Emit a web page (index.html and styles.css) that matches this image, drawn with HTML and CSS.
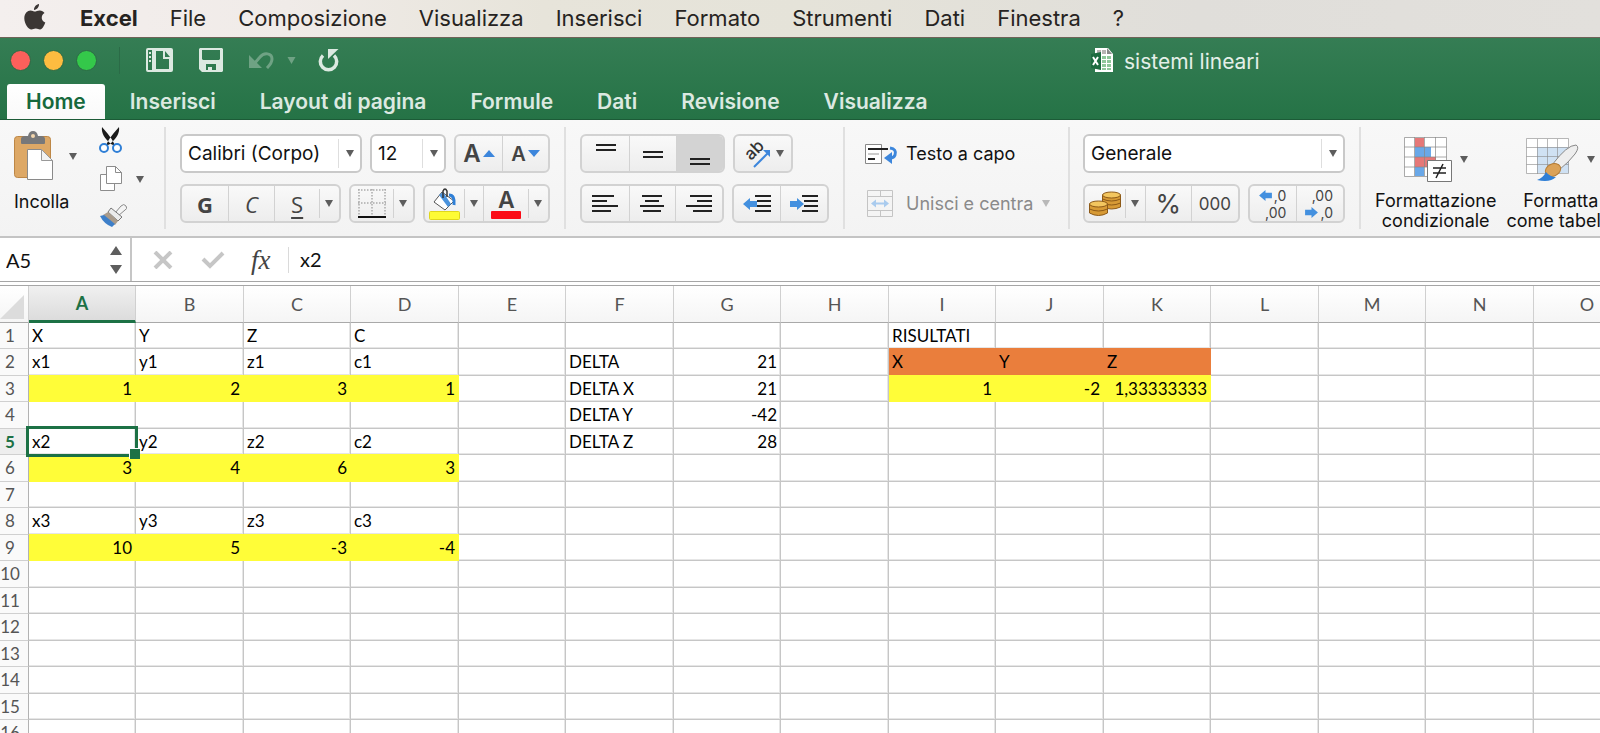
FILE: index.html
```
<!DOCTYPE html>
<html lang="it">
<head>
<meta charset="utf-8">
<title>sistemi lineari</title>
<link rel="stylesheet" href="styles.css">
</head>
<body>
<svg class="defs" aria-hidden="true">
  <symbol id="caret" viewBox="0 0 8 7"><path d="M0 0h8L4 7z"/></symbol>
  <symbol id="arrow" viewBox="0 0 14 12"><path d="M0 6l7-6v3h7v6H7v3z"/></symbol>
</svg>
<nav class="menubar" aria-label="Menu">
  <button class="apple" aria-label="Apple"><svg width="22" height="27" viewBox="0 0 22 27"><path d="M15 0c.3 2.800-2.200 6-5 5.900C9.700 3.200 12.300.3 15 0zM10.900 7.600c1 0 2.800-1.300 5-1.200 1.900.1 3.500.9 4.600 2.500-4.100 2.600-3.400 7.900.8 9.700-.9 2.600-3 6.900-5.200 7-1.600.1-2.200-1-4.300-1s-2.800 1-4.300 1C4.500 25.700.3 19.500.3 14.200c0-5 3.200-7.700 6.200-7.800 1.800 0 3.300 1.200 4.400 1.200z"/></svg></button>
  <button class="app">Excel</button><button>File</button><button>Composizione</button><button>Visualizza</button><button>Inserisci</button><button>Formato</button><button>Strumenti</button><button>Dati</button><button>Finestra</button><button>?</button>
</nav>
<header class="window-head">
  <div class="titlebar">
    <div class="lights"><button class="red" aria-label="Chiudi"></button><button class="amber" aria-label="Riduci"></button><button class="green" aria-label="Ingrandisci"></button></div>
    <div class="quick">
      <button aria-label="Nuovo"><svg width="27" height="24" viewBox="0 0 27 24"><path fill-rule="evenodd" d="M2 0h23a2 2 0 0 1 2 2v20a2 2 0 0 1-2 2H2a2 2 0 0 1-2-2V2a2 2 0 0 1 2-2zM2 2v20h4V2zM10 3v18h13v-10h-6V3zM19 3v6h5z"/><path d="M3 4h2v2H3zM3 8h2v2H3zM3 12h2v2H3z"/></svg></button>
      <button aria-label="Salva"><svg width="24" height="24" viewBox="0 0 24 24"><path fill-rule="evenodd" d="M1 0h22l1 1v22l-1 1H3l-3-3V1zM3 2v9l1 1h16l1-1V2zM7 16v6h2v-3h4v3h4v-6z"/></svg></button>
      <button class="undo" aria-label="Annulla"><svg width="26" height="18" viewBox="0 0 26 18"><path d="M0 4v13h13z"/><path d="M5 13l6-7c4-5 12-4 12 2 0 4-2 6-5 9" fill="none" stroke="currentColor" stroke-width="3"/></svg></button>
      <button class="undo-more" aria-label="Altre azioni"><svg width="9" height="7"><use href="#caret"/></svg></button>
      <button aria-label="Ripeti"><svg width="21" height="24" viewBox="0 0 21 24"><path d="M10 1h10.500L10 11z"/><path d="M5 7.500A8.200 8.200 0 1 0 16 7.500" fill="none" stroke="currentColor" stroke-width="3.500"/></svg></button>
    </div>
    <div class="doc"><svg width="22" height="26" viewBox="0 0 22 26"><path d="M4 1h13l5 6v18H4z" fill="#fff"/><path d="M6 3h4v4H6zM11 3h4v4h-4z" fill="#b8b4b4"/><path d="M16 1l5 6h-5z" fill="#8a8a8a"/><path d="M11 9h4v3h-4zM16 9h4v3h-4zM11 13h4v3h-4zM16 13h4v3h-4zM11 17h4v3h-4zM16 17h4v3h-4zM11 21h4v2h-4zM16 21h4v2h-4z" fill="#8fc79a"/><path d="M0 7l10-2v18l-10-2z" fill="#1d6b40"/><path d="M2 10l5 8M7 10l-5 8" stroke="#fff" stroke-width="2"/></svg><span>sistemi lineari</span></div>
  </div>
  <div class="tabs" role="tablist">
    <button class="active">Home</button><button>Inserisci</button><button>Layout di pagina</button><button>Formule</button><button>Dati</button><button>Revisione</button><button>Visualizza</button>
  </div>
</header>
<section class="ribbon" aria-label="Home">
  <div class="clip">
    <button class="paste"><span class="row"><svg width="40" height="50" viewBox="0 0 40 50"><rect x=".5" y="5.500" width="36" height="41" rx="3" fill="#dda866" stroke="#bd8746"/><path d="M7 12V8q0-3 4-3h3q1-5 5-5t5 5h3q4 0 4 3v4q0 1-1 1H8q-1 0-1-1z" fill="#77787a"/><circle cx="19" cy="5" r="2" fill="#f3d6ad"/><path d="M13.500 18.500h14l11 11v19h-25z" fill="#fff" stroke="#8a8a8a"/><path d="M27.500 18.500v11h11z" fill="#f2f2f2" stroke="#999"/></svg><svg class="caret" width="8" height="7"><use href="#caret"/></svg></span><span>Incolla</span></button>
    <div class="clip-tools">
      <button aria-label="Taglia"><svg width="24" height="27" viewBox="0 0 24 27"><path d="M3 0c-1 6 3 12 9 17l4 2C14 12 8 6 3 0zM20 0c1 6-3 12-9 17l-4 2C9 12 15 6 20 0z" fill="#1b1b1b"/><g fill="#fff" stroke="#2f7fd6" stroke-width="2"><circle cx="5" cy="21" r="4"/><circle cx="18" cy="21" r="4"/></g></svg></button>
      <button aria-label="Copia"><svg width="24" height="26" viewBox="0 0 24 26" fill="#fff" stroke="#8c8c8c"><path d="M1.500 8.500h14v16h-14z"/><path d="M7.500 .5h9l6 6v11h-15z"/><path d="M16.500 .5v6h6z"/></svg><svg class="caret" width="8" height="7"><use href="#caret"/></svg></button>
      <button aria-label="Copia formato"><svg width="28" height="25" viewBox="0 0 28 25"><path d="M16 9l6-7q3-3 5 0t-1 4l-7 6z" fill="#f4f4f4" stroke="#8a8a8a"/><path d="M12 4l11 9-4 4L9 8z" fill="#ececec" stroke="#777"/><path d="M9 8l10 9-3 4L4 11z" fill="#a99b8b"/><path d="M1 12l4-1 11 9-3 3Q5 20 1 12z" fill="#3d7fc9"/></svg></button>
    </div>
  </div>
  <div class="font panel">
    <div class="row">
      <label class="combo grow"><select aria-label="Carattere"><option>Calibri (Corpo)</option></select><svg class="caret" width="8" height="7"><use href="#caret"/></svg></label>
      <label class="combo size"><select aria-label="Dimensione"><option>12</option></select><svg class="caret" width="8" height="7"><use href="#caret"/></svg></label>
      <div class="group">
        <button class="b46" aria-label="Aumenta dimensione"><span class="big-a">A</span><svg width="12" height="7" fill="#3c86dc"><path d="M0 7h12L6 0z"/></svg></button>
        <button class="b46" aria-label="Riduci dimensione"><span class="small-a">A</span><svg width="12" height="7" fill="#3c86dc"><path d="M0 0h12L6 7z"/></svg></button>
      </div>
    </div>
    <div class="row spread">
      <div class="group">
        <button class="b48 letter bold">G</button><button class="b48 letter italic">C</button><button class="b46 letter under">S</button><button class="more" aria-label="Altro"><svg class="caret" width="8" height="7"><use href="#caret"/></svg></button>
      </div>
      <div class="group">
        <button class="b44" aria-label="Bordi"><svg width="28" height="29" viewBox="0 0 28 29"><path d="M0 1h28M0 14h28M1 0v26M14 0v26M27 0v26" stroke="#aaa" stroke-width="1.500" stroke-dasharray="1.500 1.500"/><path d="M0 28h28" stroke="#111" stroke-width="2"/></svg></button><button class="more" aria-label="Altro"><svg class="caret" width="8" height="7"><use href="#caret"/></svg></button>
      </div>
      <div class="group">
        <button class="b40" aria-label="Riempimento"><svg width="31" height="32" viewBox="0 0 31 32"><path d="M13 4l12 9-9 9L5 14z" fill="#fff" stroke="#555"/><path d="M10 7l4-3 8 12-3 3z" fill="#4a93dd"/><path d="M14 10V3q2-4 4 0v6" fill="none" stroke="#333" stroke-width="1.500"/><path d="M20 7q6 0 5 10" fill="none" stroke="#2f7fd6" stroke-width="3"/><rect x=".5" y="23.500" width="30" height="8" rx="1" fill="#fdfb35" stroke="#dfd71c"/></svg></button><button class="more" aria-label="Altro"><svg class="caret" width="8" height="7"><use href="#caret"/></svg></button>
        <button class="b46 font-color" aria-label="Colore carattere"><span>A</span><i></i></button><button class="more" aria-label="Altro"><svg class="caret" width="8" height="7"><use href="#caret"/></svg></button>
      </div>
    </div>
  </div>
  <div class="align panel">
    <div class="row">
      <div class="group">
        <button class="b48" aria-label="In alto"><svg width="20" height="26" stroke="#222" stroke-width="2"><path d="M0 4h20M0 9h20"/></svg></button><button class="b48" aria-label="Al centro"><svg width="20" height="26" stroke="#222" stroke-width="2"><path d="M0 11h20M0 16h20"/></svg></button><button class="b48 pressed" aria-label="In basso"><svg width="20" height="26" stroke="#222" stroke-width="2"><path d="M0 18h20M0 23h20"/></svg></button>
      </div>
      <div class="group">
        <button class="b58" aria-label="Orientamento"><svg width="30" height="30" viewBox="0 0 30 30"><text class="ab" x="9" y="22" transform="rotate(-45 9 22)">ab</text><path d="M12 28L26 14" stroke="#3c86dc" stroke-width="2"/><path d="M21 11h7v7z" fill="#3c86dc"/></svg><svg class="caret" width="8" height="7"><use href="#caret"/></svg></button>
      </div>
    </div>
    <div class="row">
      <div class="group">
        <button class="b48" aria-label="A sinistra"><svg width="26" height="18" stroke="#222" stroke-width="2"><path d="M0 1h22M0 6h15M0 11h26M0 16h19"/></svg></button><button class="b48" aria-label="Centra"><svg width="26" height="18" stroke="#222" stroke-width="2"><path d="M3 1h20M6 6h14M1 11h24M4 16h18"/></svg></button><button class="b48" aria-label="A destra"><svg width="26" height="18" stroke="#222" stroke-width="2"><path d="M4 1h22M11 6h15M0 11h26M7 16h19"/></svg></button>
      </div>
      <div class="group">
        <button class="b48" aria-label="Riduci rientro"><svg width="28" height="18"><path d="M12 1h16M14 6h14M14 11h14M12 16h16" stroke="#222" stroke-width="2"/><use href="#arrow" y="3" width="14" height="12" fill="#4390df"/></svg></button><button class="b48" aria-label="Aumenta rientro"><svg width="28" height="18"><path d="M12 1h16M14 6h14M14 11h14M12 16h16" stroke="#222" stroke-width="2"/><path d="M14 9L7 3v3H0v6h7v3z" fill="#4390df"/></svg></button>
      </div>
    </div>
  </div>
  <div class="wrap panel">
    <button class="row plain"><svg width="33" height="22" viewBox="0 0 33 22"><path d="M.5 1.500h16v19H.5z" fill="#fff" stroke="#888"/><path d="M3 6h20M3 16h7" stroke="#222" stroke-width="2"/><path d="M3 11h11" stroke="#999"/><path d="M25 5q7 1 5 7-1 3-5 3" fill="none" stroke="#3c86dc" stroke-width="3"/><path d="M19 15l8-6v12z" fill="#3c86dc"/></svg><span>Testo a capo</span></button>
    <button class="row plain" disabled><svg width="33" height="27" viewBox="0 0 33 27"><path d="M2.500 .5h25v26h-25zM2.500 6.500h25M2.500 20.500h25M15.500 .5v6M15.500 20.500v6" fill="none" stroke="#c4c4c4"/><path d="M9 13.500h12" stroke="#a9cbee" stroke-width="2"/><path d="M6 13.500l5-4v8zM24 13.500l-5-4v8z" fill="#a9cbee"/></svg><span>Unisci e centra</span><svg class="caret" width="8" height="7"><use href="#caret"/></svg></button>
  </div>
  <div class="number panel">
    <div class="row"><label class="combo grow"><select aria-label="Formato numero"><option>Generale</option></select><svg class="caret" width="8" height="7"><use href="#caret"/></svg></label></div>
    <div class="row spread">
      <div class="group">
        <button class="b40" aria-label="Valuta"><svg width="32" height="26" viewBox="0 0 32 26" stroke="#8d5a18"><g fill="#d79a35"><path d="M13.500 4v12q9 4 18 0V4z"/><path d="M13.500 8q9 4 18 0M13.500 12q9 4 18 0" fill="none"/><ellipse cx="22.500" cy="4" rx="9" ry="3" fill="#f3c65f"/><path d="M.5 13v9q9 5 18 0v-9z"/><path d="M.5 18q9 4 18 0" fill="none"/><ellipse cx="9.500" cy="13" rx="9" ry="3" fill="#f3c65f"/></g></svg></button><button class="more" aria-label="Altro"><svg class="caret" width="8" height="7"><use href="#caret"/></svg></button><button class="b48 percent">%</button><button class="b48 zeros">000</button>
      </div>
      <div class="group">
        <button class="b48 dec" aria-label="Aumenta decimali"><span><svg width="13" height="11"><use href="#arrow"/></svg>,0</span><span>,00</span></button><button class="b48 dec" aria-label="Diminuisci decimali"><span>,00</span><span><svg class="flip" width="13" height="11"><use href="#arrow"/></svg>,0</span></button>
      </div>
    </div>
  </div>
  <div class="styles">
    <button class="tall"><span class="row"><svg width="48" height="45" viewBox="0 0 48 45"><path d="M.5 .5h42v39H.5z" fill="#fff"/><path d="M11 1h9v9h-9zM11 20h21v10H11z" fill="#e57878"/><path d="M11 10h16v10H11zM11 30h9v9h-9z" fill="#6aa8e8"/><path d="M.5 .5h42v39H.5zM.5 10h42M.5 20h42M.5 30h42M10.500 0v39M20.500 0v39M31.500 0v39" fill="none" stroke="#888" stroke-opacity=".7"/><path d="M23.500 23.500h24v21h-24z" fill="#fff" stroke="#777"/><path d="M29 31h13M29 36h13M39 27l-7 14" stroke="#222" stroke-width="1.500"/></svg><svg class="caret" width="8" height="7"><use href="#caret"/></svg></span><span>Formattazione<br>condizionale</span></button>
    <button class="tall"><span class="row"><svg width="53" height="45" viewBox="0 0 53 45"><path d="M.5 1.500h42v35H.5z" fill="#fff"/><path d="M11 10h32v26H11z" fill="#cfe1f3"/><path d="M.5 1.500h42v35H.5zM.5 10.500h42M.5 19.500h42M.5 27.500h42M11.500 2v35M21.500 2v35M31.500 2v35" fill="none" stroke="#888" stroke-opacity=".6"/><path d="M26 28Q41 8 50 8q4 2-1 9-6 8-16 16z" fill="#eee" stroke="#888"/><ellipse cx="27" cy="33" rx="8" ry="6" fill="#dba258" stroke="#b57c35" transform="rotate(-25 27 33)"/><path d="M20 35q4 5 10 5-6 6-19 3 6-2 9-8z" fill="#2f7fd6"/></svg><svg class="caret" width="8" height="7"><use href="#caret"/></svg></span><span>Formatta<br>come tabella</span></button>
  </div>
</section>
<section class="formula-bar" aria-label="Barra della formula">
  <input class="name-box" value="A5" aria-label="Casella nome">
  <button class="stepper" aria-label="Scorri"><svg width="12" height="28"><path d="M6 0l6 9H0zM0 19h12l-6 9z" fill="#5e5e5e"/></svg></button>
  <button class="cancel" aria-label="Annulla"><svg width="20" height="18" stroke="#c6c6c6" stroke-width="4"><path d="M2 1l16 16M18 1L2 17"/></svg></button>
  <button class="accept" aria-label="Conferma"><svg width="24" height="18" fill="none" stroke="#c6c6c6" stroke-width="4"><path d="M2 8l7 7L22 2"/></svg></button>
  <button class="fx" aria-label="Inserisci funzione"><i>fx</i></button>
  <input class="formula" value="x2" aria-label="Formula">
</section>
<main class="sheet">
<table>
<colgroup><col class="nums"><col class="odd"><col class="even"><col class="odd"><col class="even"><col class="odd"><col class="even"><col class="odd"><col class="even"><col class="odd"><col class="even"><col class="odd"><col class="even"><col class="odd"><col class="even"><col class="odd"></colgroup>
<thead><tr><th class="corner"><svg width="24" height="24"><path d="M24 0v24H0z" fill="#dcdcdc"/></svg></th><th class="cur">A</th><th>B</th><th>C</th><th>D</th><th>E</th><th>F</th><th>G</th><th>H</th><th>I</th><th>J</th><th>K</th><th>L</th><th>M</th><th>N</th><th>O</th></tr></thead>
<tbody>
<tr><th>1</th><td>X</td><td>Y</td><td>Z</td><td>C</td><td></td><td></td><td></td><td></td><td>RISULTATI</td><td></td><td></td><td></td><td></td><td></td><td></td></tr>
<tr><th>2</th><td>x1</td><td>y1</td><td>z1</td><td>c1</td><td></td><td>DELTA</td><td class="num">21</td><td></td><td class="orange">X</td><td class="orange">Y</td><td class="orange">Z</td><td></td><td></td><td></td><td></td></tr>
<tr><th>3</th><td class="yellow">1</td><td class="yellow">2</td><td class="yellow">3</td><td class="yellow">1</td><td></td><td>DELTA X</td><td class="num">21</td><td></td><td class="yellow">1</td><td class="yellow">-2</td><td class="yellow">1,33333333</td><td></td><td></td><td></td><td></td></tr>
<tr><th>4</th><td></td><td></td><td></td><td></td><td></td><td>DELTA Y</td><td class="num">-42</td><td></td><td></td><td></td><td></td><td></td><td></td><td></td><td></td></tr>
<tr><th class="cur">5</th><td class="selected">x2<span class="ring"></span></td><td>y2</td><td>z2</td><td>c2</td><td></td><td>DELTA Z</td><td class="num">28</td><td></td><td></td><td></td><td></td><td></td><td></td><td></td><td></td></tr>
<tr><th>6</th><td class="yellow">3</td><td class="yellow">4</td><td class="yellow">6</td><td class="yellow">3</td><td></td><td></td><td></td><td></td><td></td><td></td><td></td><td></td><td></td><td></td><td></td></tr>
<tr><th>7</th><td></td><td></td><td></td><td></td><td></td><td></td><td></td><td></td><td></td><td></td><td></td><td></td><td></td><td></td><td></td></tr>
<tr><th>8</th><td>x3</td><td>y3</td><td>z3</td><td>c3</td><td></td><td></td><td></td><td></td><td></td><td></td><td></td><td></td><td></td><td></td><td></td></tr>
<tr><th>9</th><td class="yellow">10</td><td class="yellow">5</td><td class="yellow">-3</td><td class="yellow">-4</td><td></td><td></td><td></td><td></td><td></td><td></td><td></td><td></td><td></td><td></td><td></td></tr>
<tr><th>10</th><td></td><td></td><td></td><td></td><td></td><td></td><td></td><td></td><td></td><td></td><td></td><td></td><td></td><td></td><td></td></tr>
<tr><th>11</th><td></td><td></td><td></td><td></td><td></td><td></td><td></td><td></td><td></td><td></td><td></td><td></td><td></td><td></td><td></td></tr>
<tr><th>12</th><td></td><td></td><td></td><td></td><td></td><td></td><td></td><td></td><td></td><td></td><td></td><td></td><td></td><td></td><td></td></tr>
<tr><th>13</th><td></td><td></td><td></td><td></td><td></td><td></td><td></td><td></td><td></td><td></td><td></td><td></td><td></td><td></td><td></td></tr>
<tr><th>14</th><td></td><td></td><td></td><td></td><td></td><td></td><td></td><td></td><td></td><td></td><td></td><td></td><td></td><td></td><td></td></tr>
<tr><th>15</th><td></td><td></td><td></td><td></td><td></td><td></td><td></td><td></td><td></td><td></td><td></td><td></td><td></td><td></td><td></td></tr>
<tr><th>16</th><td></td><td></td><td></td><td></td><td></td><td></td><td></td><td></td><td></td><td></td><td></td><td></td><td></td><td></td><td></td></tr>
</tbody>
</table>
</main>
</body>
</html>
```
FILE: styles.css
```
* { box-sizing: border-box; }
body { margin: 0; height: 100vh; overflow: hidden; display: flex; flex-direction: column; background: #fff; color: #111; font: 18px/20px Inter, "Liberation Sans", sans-serif; }
button, input, select { font: inherit; color: inherit; background: none; border: 0; margin: 0; padding: 0; }
svg { display: block; flex: none; }
svg:not([fill]) { fill: currentColor; }
.defs { position: absolute; width: 0; height: 0; }
.row { display: flex; align-items: center; }

.menubar { flex: none; display: flex; align-items: center; gap: 32px; height: 38px; padding: 0 24px 2px; border-bottom: 1px solid #6f6358; background: linear-gradient(90deg, #f4efee 0%, #f0ebe8 18%, #e7e4da 34%, #e5e3d9 50%, #e0deda 75%, #e2e0dc 100%); font-size: 22px; line-height: 28px; color: #262321; white-space: nowrap; }
.menubar .apple { margin-right: 2px; color: #3b3634; }
.menubar .app { font-weight: 700; }

.window-head { flex: none; background: linear-gradient(#357d54, #257346); color: #dce9e1; border-bottom: 1px solid #1c5b37; }
.titlebar { display: flex; align-items: center; height: 46px; padding-left: 10px; padding-bottom: 2px; }
.lights { display: flex; gap: 12px; padding-right: 22px; border-right: 1px solid #2b6b47; height: 27px; align-items: center; }
.lights button { width: 21px; height: 21px; border-radius: 50%; border: 1px solid #2c6a45; }
.red { background: #fc605b; }
.amber { background: #fdbc40; }
.green { background: #34c84a; }
.quick { display: flex; align-items: center; gap: 26px; padding-left: 26px; width: 971px; }
.quick .undo, .quick .undo-more { color: #6fa284; }
.quick .undo-more { margin: 0 -4px 0 -14px; }
.doc { display: flex; align-items: center; gap: 11px; font-size: 21px; line-height: 26px; color: #e4efe8; white-space: nowrap; }
.doc span { padding-top: 4px; }
.tabs { display: flex; height: 35px; padding-left: 7px; }
.tabs button { padding: 0 22px; font-size: 21px; line-height: 32px; font-weight: 600; white-space: nowrap; }
.tabs .active { padding: 0 19px; margin-right: 3px; background: linear-gradient(#fff, #f9f9f9); border-radius: 3px 3px 0 0; color: #16693c; }

.ribbon { flex: none; display: flex; height: 118px; padding: 7px 0; background: linear-gradient(#f8f8f8, #f3f3f3); border-bottom: 2px solid #c4c4c4; overflow: hidden; }
.ribbon > div { flex: none; border-right: 2px solid #e0e0e0; }
.caret { color: #5d5d5d; }
.clip { display: flex; width: 166px; }
.paste { width: 86px; padding-left: 14px; display: flex; flex-direction: column; align-items: flex-start; gap: 11px; padding-top: 4px; }
.paste .row { gap: 15px; }
.clip-tools { display: flex; flex-direction: column; justify-content: space-between; padding: 0 0 0 13px; }
.clip-tools button { display: flex; align-items: center; gap: 13px; }
.panel { display: flex; flex-direction: column; gap: 11px; padding: 7px 14px 0; }
.panel .row { gap: 8px; height: 39px; }
.panel .spread { justify-content: space-between; }
.font { width: 400px; }
.grow { flex: 1; }
.size { width: 76px; }
.combo { position: relative; display: block; height: 39px; }
.combo select { appearance: none; width: 100%; height: 100%; padding: 0 6px; border: 2px solid #c9c9c9; border-radius: 6px; background: #fff; font-size: 19px; }
.combo::after { content: ""; position: absolute; top: 5px; bottom: 5px; right: 23px; border-right: 1px solid #dedede; }
.combo .caret { position: absolute; right: 8px; top: 16px; pointer-events: none; }
.group { display: flex; height: 39px; border: 2px solid #d2d2d2; border-radius: 6px; background: linear-gradient(#f9f9f9, #ededed); overflow: hidden; color: #444; }
.group button { display: flex; align-items: center; justify-content: center; border-left: 1px solid #d2d2d2; }
.group button:first-child { border-left: 0; }
.group .more { width: 20px; position: relative; border-left: 0; }
.group .more::before { content: ""; position: absolute; left: 0; top: 3px; bottom: 3px; border-left: 1px solid #d2d2d2; }
.b40 { width: 40px; }
.b44 { width: 43px; }
.b46 { width: 46px; }
.b48 { width: 47px; }
.b58 { width: 56px; gap: 4px; }
.pressed { background: #d3d3d3; }
.big-a, .small-a { font-weight: 600; margin-right: 2px; }
.big-a { font-size: 24px; }
.small-a { font-size: 20px; }
.letter { font: 22px/26px "Open Sans", sans-serif; }
.group .bold { font-weight: 700; }
.group .italic { font-style: italic; }
.group .under { text-decoration: underline; text-underline-offset: 4px; text-decoration-thickness: 2px; }
.group .font-color { flex-direction: column; font: 600 23px/22px Inter, sans-serif; }
.font-color i { width: 30px; height: 8px; border-radius: 1px; background: #fb0b16; }
.align { width: 279px; }
.ab { font: 500 17px Inter, sans-serif; fill: #333; }
.panel.wrap { width: 225px; padding-left: 20px; }
.plain { font-size: 18px; white-space: nowrap; }
.plain .caret { margin-left: 1px; }
.plain:disabled { color: #8a8a8a; }
.plain:disabled .caret { color: #b8b8b8; }
.number { width: 291px; padding-left: 13px; }
.percent { font-size: 26px; }
.zeros { font-size: 17px; }
.group .dec { flex-direction: column; align-items: flex-end; padding-right: 10px; font-size: 14px; line-height: 17px; }
.dec span { display: flex; align-items: center; gap: 2px; }
.dec svg { color: #4390df; }
.flip { transform: scaleX(-1); }
.ribbon > .styles { display: flex; gap: 10px; padding-left: 14px; border-right: 0; }
.tall { display: flex; flex-direction: column; align-items: center; padding-top: 10px; gap: 9px; text-align: center; white-space: nowrap; }
.tall .row { gap: 8px; }

.formula-bar { flex: none; display: flex; align-items: center; height: 44px; border-bottom: 1px solid #a6a6a6; background: #fff; }
.name-box { width: 108px; height: 42px; padding-left: 6px; font: 20px/24px Lato, sans-serif; }
.stepper { width: 24px; height: 43px; padding-left: 2px; border-right: 2px solid #c6c6c6; }
.cancel { margin-left: 21px; }
.accept { margin-left: 28px; }
.fx { margin-left: 26px; width: 38px; text-align: left; border-right: 1px solid #dadada; font: 27px/26px "Liberation Serif", serif; color: #444; }
.formula { flex: 1; height: 42px; padding: 0 11px 2px; font: 20px/24px Lato, sans-serif; }

.sheet { flex: 1; min-height: 0; overflow: hidden; margin-top: 3px; border-top: 1px solid #a6a6a6; }
table { width: 1531px; min-width: 100%; table-layout: fixed; border-collapse: separate; border-spacing: 0; font: 17px/24px Lato, sans-serif; color: #000; }
table { width: 1639px; }
.nums { width: 29px; }
.odd { width: 107px; }
.even { width: 108px; }
th { padding: 0; font-weight: 400; font-size: 17px; color: #555; }
thead th { height: 37px; border-right: 1px solid #d0d0d0; border-bottom: 1px solid #a9a9a9; background: linear-gradient(#fff, #f5f5f5); font-size: 18px; }
thead .corner { padding: 6px 0 0; vertical-align: middle; }
tbody th { padding-right: 8px; border-right: 1px solid #b2b2b2; border-bottom: 1px solid #d0d0d0; background: #fafafa; }
.cur { font-weight: 700; color: #1c7145; }
thead .cur { background: linear-gradient(#f0f0f0, #dcdcdc); border-bottom: 3px solid #1c7145; }
tbody .cur { background: #eee; }
td { padding: 0 4px 0 3px; border-right: 1px solid #c6c6c6; border-bottom: 1px solid #c6c6c6; box-shadow: inset -1px -1px #e6e6e6; white-space: nowrap; }
tbody tr { height: 26px; }
tbody tr:nth-child(even) { height: 27px; }
tbody th, tbody td { line-height: 24px; }
.num, .yellow { text-align: right; }
td.yellow, td.num { padding-right: 3px; }
.yellow { background: #fffd38; border-color: #fffd38; box-shadow: 0 -1px #fffd38; }
.orange { background: #ea7e3c; border-color: #ea7e3c; box-shadow: 0 -1px #ea7e3c; }
.selected { position: relative; }
.ring { position: absolute; inset: -3px; border: 3px solid #1c7145; z-index: 1; }
.ring::after { content: ""; position: absolute; right: -5px; bottom: -5px; width: 10px; height: 10px; background: #1c7145; border: solid #fff; border-width: 1px 0 0 1px; }
```
